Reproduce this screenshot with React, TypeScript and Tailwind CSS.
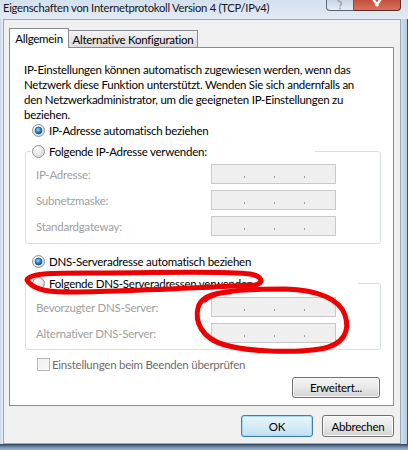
function Radio({ checked }: { checked?: boolean }) {
  return (
    <svg width="13" height="13" viewBox="0 0 13 13" className="shrink-0">
      <defs>
        <radialGradient id="rb-fill" cx="0.35" cy="0.3" r="0.8">
          <stop offset="0" stopColor="#ffffff" />
          <stop offset="1" stopColor="#d4d4d4" />
        </radialGradient>
        <radialGradient id="rb-dot" cx="0.4" cy="0.35" r="0.7">
          <stop offset="0" stopColor="#8fd6ff" />
          <stop offset="0.6" stopColor="#2a86c8" />
          <stop offset="1" stopColor="#0f3f66" />
        </radialGradient>
      </defs>
      <circle cx="6.5" cy="6.5" r="6" fill="url(#rb-fill)" stroke="#8f9498" />
      {checked && <circle cx="6.5" cy="6.5" r="3.4" fill="url(#rb-dot)" stroke="#1d4f78" strokeWidth="0.8" />}
    </svg>
  )
}

function IpField() {
  return (
    <div className="flex h-[20px] w-[125px] items-end border border-[#c9c9c9] bg-[#efefef] pb-[5px] pl-[32px]">
      <div className="h-[2px] w-px bg-[#9a9a9a]"></div>
      <div className="ml-[29px] h-[2px] w-px bg-[#9a9a9a]"></div>
      <div className="ml-[29px] h-[2px] w-px bg-[#9a9a9a]"></div>
    </div>
  )
}

function Row({ label }: { label: string }) {
  return (
    <div className="flex h-[20px] items-center">
      <div className="w-[185px] pl-[10px] text-[#a0a0a0]">{label}</div>
      <IpField />
    </div>
  )
}

export default function App() {
  return (
    <div className="relative h-[450px] w-[408px] overflow-hidden bg-[#dbe6f1] font-['Lato',sans-serif] text-[11.5px] leading-[15px] tracking-[-0.25px] text-black">
      {/* title bar */}
      <div className="flex h-[19px] bg-gradient-to-b from-[#d3e0ee] to-[#e3ebf4]">
        <div className="pl-[3px] text-[11.2px] leading-[16px] text-[#151515]">
          Eigenschaften von Internetprotokoll Version 4 (TCP/IPv4)
        </div>
        <div className="ml-auto mr-[7px] flex h-[11px]">
          <div className="flex w-[28px] justify-center rounded-bl-[4px] border border-t-0 border-[#55657a] bg-gradient-to-b from-[#c9d5e2] to-[#e6ecf3]">
            <svg width="10" height="10" viewBox="0 0 10 10">
              <path d="M3,0 C3,2 6.5,1.5 6.5,3.5 C6.5,5 5,5 5,6.5" fill="none" stroke="#9aa6b4" strokeWidth="1.6" />
              <rect x="4.2" y="7.6" width="1.7" height="1.7" fill="#9aa6b4" />
            </svg>
          </div>
          <div className="flex w-[47px] justify-center rounded-br-[4px] border border-l-0 border-t-0 border-[#5b2a22] bg-gradient-to-b from-[#c4503c] to-[#d8735e]">
            <svg width="14" height="10" viewBox="0 0 14 10">
              <path d="M1,-4 L8,6 M13,-4 L6,6" fill="none" stroke="#ffffff" strokeWidth="2.4" />
            </svg>
          </div>
        </div>
      </div>

      <div className="flex h-[425px]">
        <div className="w-[3px] bg-gradient-to-r from-[#c8d8ea] to-[#e8eff7]"></div>
        {/* client area */}
        <div className="flex w-[398px] flex-col border border-[#9aa8b8] bg-[#f0f0f0]">
          {/* tabs */}
          <div className="ml-[5px] mt-[8px] flex h-[19px] items-end whitespace-nowrap">
            <div className="relative z-10 -mb-px flex h-[20px] w-[60px] items-center justify-center border border-b-0 border-[#898c95] bg-white">
              Allgemein
            </div>
            <div className="flex h-[17px] w-[129px] items-center justify-center border border-b-0 border-l-0 border-[#898c95] bg-gradient-to-b from-[#f3f3f3] to-[#dcdcdc] pt-px">
              Alternative Konfiguration
            </div>
          </div>

          {/* panel */}
          <div className="ml-[5px] flex h-[359px] w-[385px] flex-col border border-[#898c95] bg-white">
            <div className="ml-[14px] mt-[14px] whitespace-nowrap">
              IP-Einstellungen können automatisch zugewiesen werden, wenn das
              <br />
              Netzwerk diese Funktion unterstützt. Wenden Sie sich andernfalls an
              <br />
              den Netzwerkadministrator, um die geeigneten IP-Einstellungen zu
              <br />
              beziehen.
            </div>

            <div className="ml-[22px] flex h-[16px] items-center gap-[4px]">
              <Radio checked />
              <span>IP-Adresse automatisch beziehen</span>
            </div>

            <fieldset className="ml-[15px] mt-[5px] w-[356px] rounded-[3px] border border-[#d5dfe5] pb-[7px]">
              <legend className="ml-[5px] flex h-[16px] w-[284px] items-center gap-[4px] pl-px">
                <Radio />
                <span>Folgende IP-Adresse verwenden:</span>
              </legend>
              <div className="mt-[5px] flex flex-col gap-[6px]">
                <Row label="IP-Adresse:" />
                <Row label="Subnetzmaske:" />
                <Row label="Standardgateway:" />
              </div>
            </fieldset>

            <div className="ml-[22px] mt-[9px] flex h-[16px] items-center gap-[4px]">
              <Radio checked />
              <span>DNS-Serveradresse automatisch beziehen</span>
            </div>

            <fieldset className="ml-[15px] mt-[6px] w-[356px] rounded-[3px] border border-[#d5dfe5] pb-[6px]">
              <legend className="ml-[5px] flex h-[16px] w-[327px] items-center gap-[4px] pl-px">
                <Radio />
                <span>Folgende DNS-Serveradressen verwenden</span>
              </legend>
              <div className="mt-[6px] flex flex-col gap-[6px]">
                <Row label="Bevorzugter DNS-Server:" />
                <Row label="Alternativer DNS-Server:" />
              </div>
            </fieldset>

            <div className="ml-[27px] mt-[6px] flex h-[16px] items-center gap-[2px]">
              <div className="h-[13px] w-[13px] border border-[#b9b9b9] bg-gradient-to-br from-[#f0f0f0] to-[#fafafa]"></div>
              <span className="text-[#6d6d6d]">Einstellungen beim Beenden überprüfen</span>
            </div>

            <div className="mr-[13px] mt-[5px] flex h-[21px] w-[88px] items-center justify-center self-end rounded-[3px] border border-[#707070] bg-gradient-to-b from-[#f4f4f4] via-[#e8e8e8] to-[#d2d2d2] shadow-[inset_0_0_0_1px_#fbfbfb]">
              Erweitert...
            </div>
          </div>

          {/* dialog buttons */}
          <div className="mr-[6px] mt-[9px] flex justify-end gap-[9px]">
            <div className="flex h-[22px] w-[72px] items-center justify-center rounded-[3px] border border-[#3c7fb1] bg-gradient-to-b from-[#e9f5fc] via-[#d7ecf8] to-[#bfe0f3] shadow-[inset_0_0_0_1px_#a8d8f3]">
              OK
            </div>
            <div className="flex h-[22px] w-[72px] items-center justify-center rounded-[3px] border border-[#707070] bg-gradient-to-b from-[#f4f4f4] via-[#e8e8e8] to-[#d2d2d2] shadow-[inset_0_0_0_1px_#fbfbfb]">
              Abbrechen
            </div>
          </div>
        </div>
        <div className="flex-1 border-r border-[#3b4f66] bg-gradient-to-r from-[#cfdeee] to-[#b7cbe0]"></div>
      </div>
      {/* bottom frame */}
      <div className="h-[6px] bg-gradient-to-b from-[#2f435a] via-[#6f8dab] to-[#9fb8d0]"></div>

      {/* red marker scribbles */}
      <svg className="pointer-events-none absolute inset-0" width="408" height="450" viewBox="0 0 408 450">
        <path
          d="M27,280 C30,272 60,273 110,273 C170,272 230,271 250,274 C262,276 265,283 255,285 C210,287 120,292 65,292 C45,292 32,289 27,280 Z"
          fill="none"
          stroke="#ee0000"
          strokeWidth="5"
          strokeLinejoin="round"
        />
        <path
          d="M205,300 C215,290 250,289 285,289 C320,290 340,300 345,315 C350,330 345,345 320,349 C295,353 250,352 225,345 C200,338 195,320 198,308 C200,298 210,293 230,292"
          fill="none"
          stroke="#ee0000"
          strokeWidth="5"
          strokeLinecap="round"
        />
      </svg>
    </div>
  )
}
